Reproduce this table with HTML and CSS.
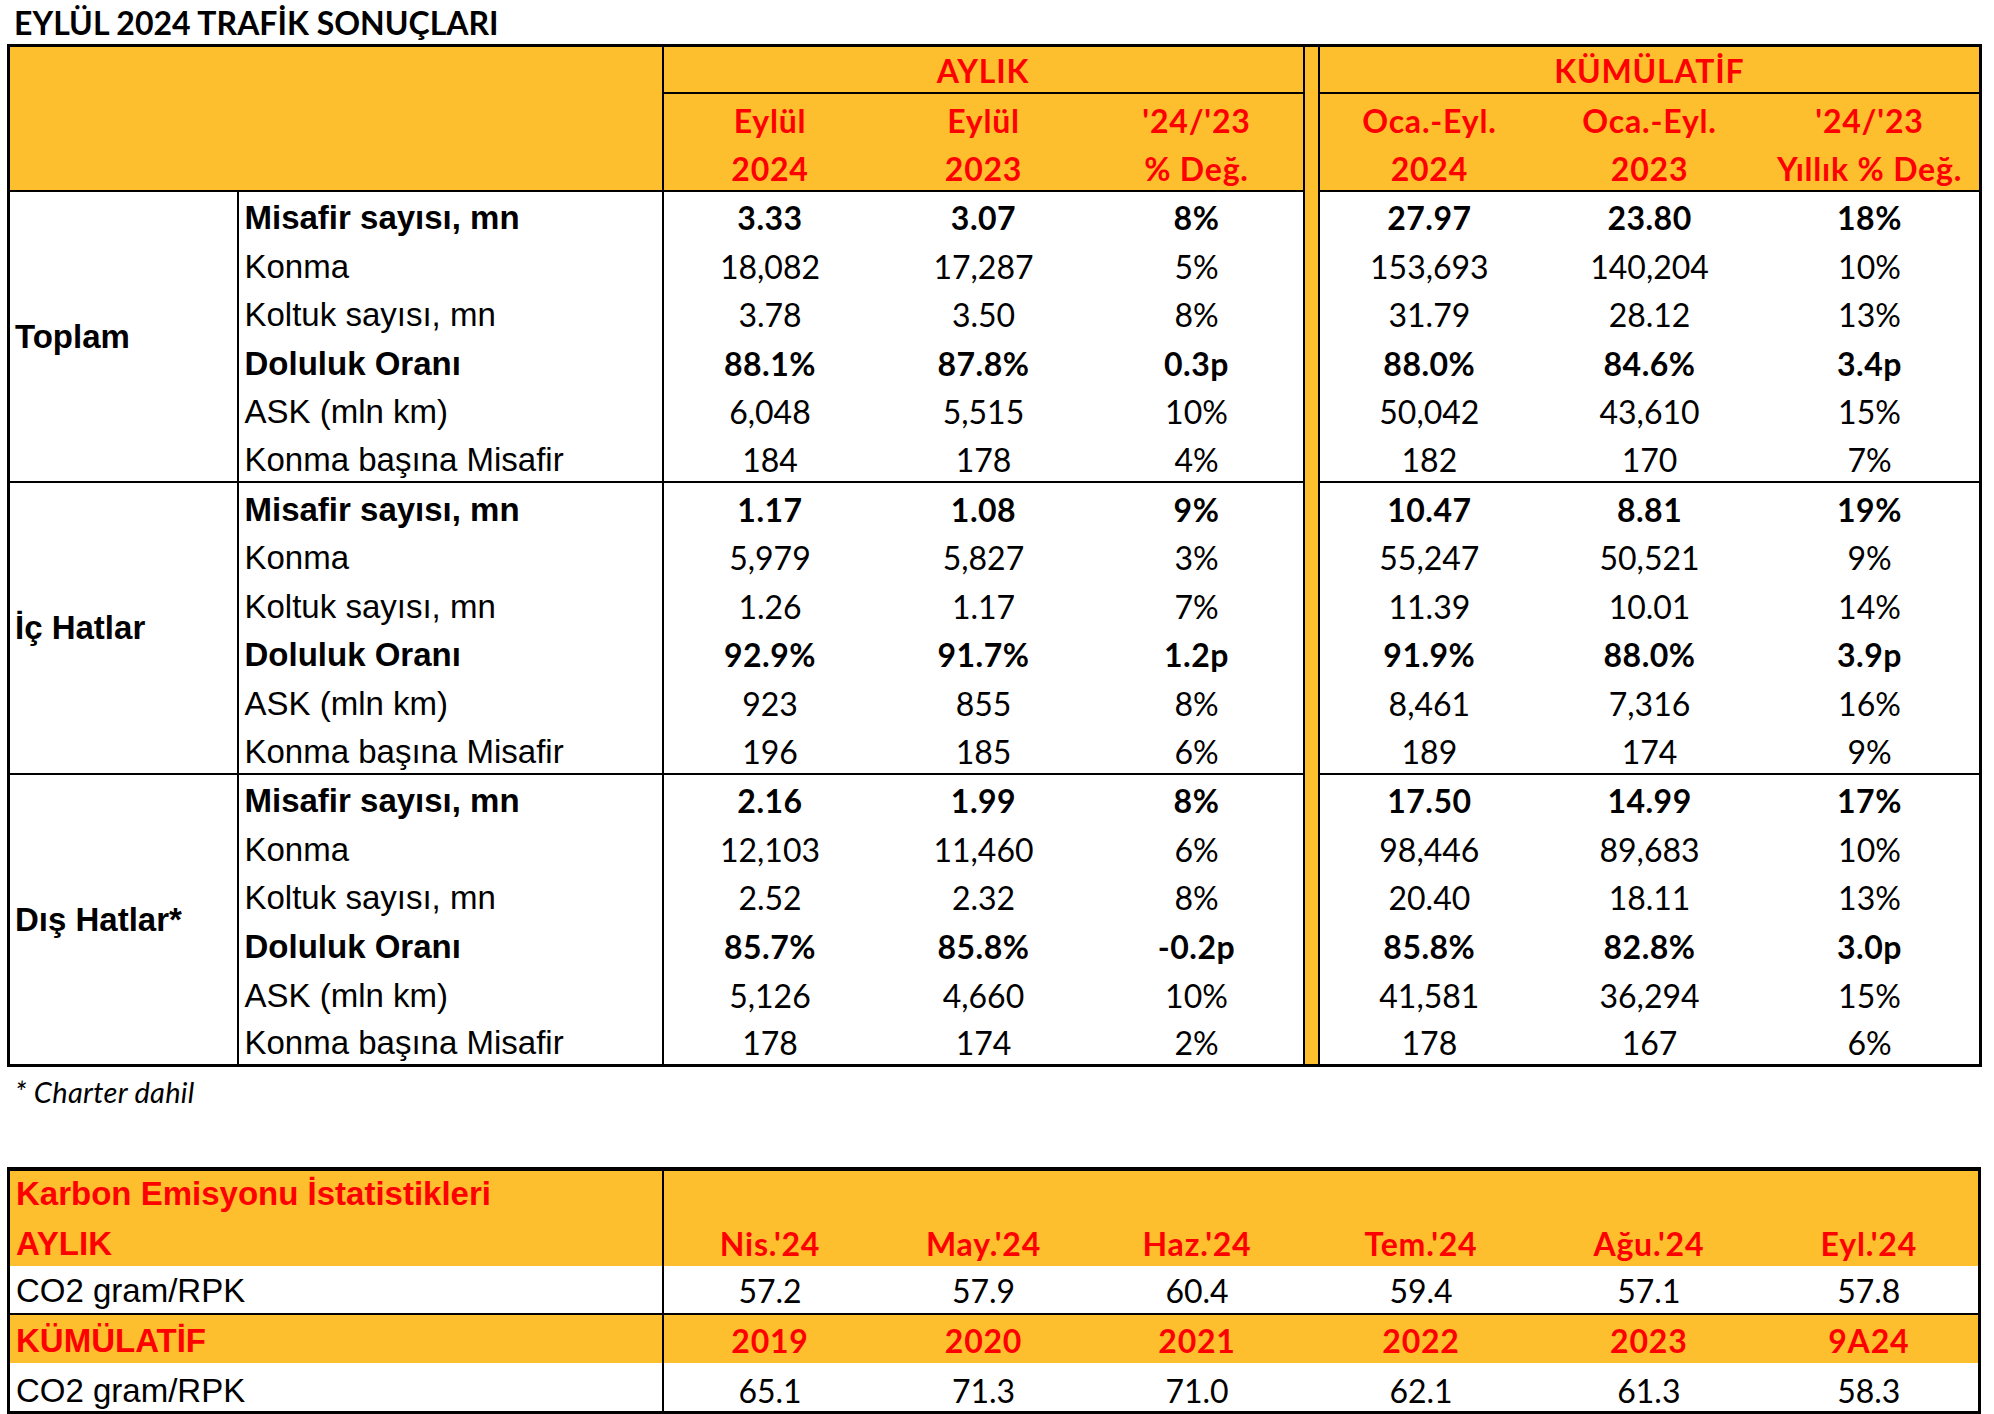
FILE: index.html
```html
<!DOCTYPE html>
<html lang="tr">
<head>
<meta charset="utf-8">
<title>Eylül 2024 Trafik Sonuçları</title>
<link rel="stylesheet" href="styles.css">
</head>
<body>
<div class="page">
  <h1 class="title">EYLÜL 2024 TRAFİK SONUÇLARI</h1>

  <table class="traffic">
    <colgroup>
      <col class="c-grp"><col class="c-lbl">
      <col class="c-m"><col class="c-m"><col class="c-m3">
      <col class="c-sep">
      <col class="c-k"><col class="c-k"><col class="c-k">
    </colgroup>
    <tbody>
      <tr class="h1">
        <th class="hd-blank" colspan="2" rowspan="3"></th>
        <th class="hd-group" colspan="3">AYLIK</th>
        <td class="sep" rowspan="21"></td>
        <th class="hd-group" colspan="3">KÜMÜLATİF</th>
      </tr>
      <tr class="h2">
        <th class="hd">Eylül</th><th class="hd">Eylül</th><th class="hd">'24/'23</th>
        <th class="hd">Oca.-Eyl.</th><th class="hd">Oca.-Eyl.</th><th class="hd">'24/'23</th>
      </tr>
      <tr class="h3">
        <th class="hd">2024</th><th class="hd">2023</th><th class="hd">% Değ.</th>
        <th class="hd">2024</th><th class="hd">2023</th><th class="hd">Yıllık % Değ.</th>
      </tr>

      <tr class="d b"><th class="grp" rowspan="6">Toplam</th><td class="lbl">Misafir sayısı, mn</td><td>3.33</td><td>3.07</td><td>8%</td><td>27.97</td><td>23.80</td><td>18%</td></tr>
      <tr class="d"><td class="lbl">Konma</td><td>18,082</td><td>17,287</td><td>5%</td><td>153,693</td><td>140,204</td><td>10%</td></tr>
      <tr class="d"><td class="lbl">Koltuk sayısı, mn</td><td>3.78</td><td>3.50</td><td>8%</td><td>31.79</td><td>28.12</td><td>13%</td></tr>
      <tr class="d b"><td class="lbl">Doluluk Oranı</td><td>88.1%</td><td>87.8%</td><td>0.3p</td><td>88.0%</td><td>84.6%</td><td>3.4p</td></tr>
      <tr class="d"><td class="lbl">ASK (mln km)</td><td>6,048</td><td>5,515</td><td>10%</td><td>50,042</td><td>43,610</td><td>15%</td></tr>
      <tr class="d last"><td class="lbl">Konma başına Misafir</td><td>184</td><td>178</td><td>4%</td><td>182</td><td>170</td><td>7%</td></tr>

      <tr class="d b"><th class="grp" rowspan="6">İç Hatlar</th><td class="lbl">Misafir sayısı, mn</td><td>1.17</td><td>1.08</td><td>9%</td><td>10.47</td><td>8.81</td><td>19%</td></tr>
      <tr class="d"><td class="lbl">Konma</td><td>5,979</td><td>5,827</td><td>3%</td><td>55,247</td><td>50,521</td><td>9%</td></tr>
      <tr class="d"><td class="lbl">Koltuk sayısı, mn</td><td>1.26</td><td>1.17</td><td>7%</td><td>11.39</td><td>10.01</td><td>14%</td></tr>
      <tr class="d b"><td class="lbl">Doluluk Oranı</td><td>92.9%</td><td>91.7%</td><td>1.2p</td><td>91.9%</td><td>88.0%</td><td>3.9p</td></tr>
      <tr class="d"><td class="lbl">ASK (mln km)</td><td>923</td><td>855</td><td>8%</td><td>8,461</td><td>7,316</td><td>16%</td></tr>
      <tr class="d last"><td class="lbl">Konma başına Misafir</td><td>196</td><td>185</td><td>6%</td><td>189</td><td>174</td><td>9%</td></tr>

      <tr class="d b"><th class="grp" rowspan="6">Dış Hatlar*</th><td class="lbl">Misafir sayısı, mn</td><td>2.16</td><td>1.99</td><td>8%</td><td>17.50</td><td>14.99</td><td>17%</td></tr>
      <tr class="d"><td class="lbl">Konma</td><td>12,103</td><td>11,460</td><td>6%</td><td>98,446</td><td>89,683</td><td>10%</td></tr>
      <tr class="d"><td class="lbl">Koltuk sayısı, mn</td><td>2.52</td><td>2.32</td><td>8%</td><td>20.40</td><td>18.11</td><td>13%</td></tr>
      <tr class="d b"><td class="lbl">Doluluk Oranı</td><td>85.7%</td><td>85.8%</td><td>-0.2p</td><td>85.8%</td><td>82.8%</td><td>3.0p</td></tr>
      <tr class="d"><td class="lbl">ASK (mln km)</td><td>5,126</td><td>4,660</td><td>10%</td><td>41,581</td><td>36,294</td><td>15%</td></tr>
      <tr class="d"><td class="lbl">Konma başına Misafir</td><td>178</td><td>174</td><td>2%</td><td>178</td><td>167</td><td>6%</td></tr>
    </tbody>
  </table>

  <p class="note">* Charter dahil</p>

  <table class="carbon">
    <colgroup>
      <col class="c-first">
      <col class="c-m"><col class="c-m"><col class="c-m3">
      <col class="c-k4"><col class="c-k"><col class="c-k">
    </colgroup>
    <tbody>
      <tr class="g r1"><th class="clbl red">Karbon Emisyonu İstatistikleri</th><td colspan="6"></td></tr>
      <tr class="g r2"><th class="clbl red">AYLIK</th><td class="hv">Nis.'24</td><td class="hv">May.'24</td><td class="hv">Haz.'24</td><td class="hv">Tem.'24</td><td class="hv">Ağu.'24</td><td class="hv">Eyl.'24</td></tr>
      <tr class="w r3"><th class="clbl">CO2 gram/RPK</th><td>57.2</td><td>57.9</td><td>60.4</td><td>59.4</td><td>57.1</td><td>57.8</td></tr>
      <tr class="g r4"><th class="clbl red">KÜMÜLATİF</th><td class="hv">2019</td><td class="hv">2020</td><td class="hv">2021</td><td class="hv">2022</td><td class="hv">2023</td><td class="hv">9A24</td></tr>
      <tr class="w r5"><th class="clbl">CO2 gram/RPK</th><td>65.1</td><td>71.3</td><td>71.0</td><td>62.1</td><td>61.3</td><td>58.3</td></tr>
    </tbody>
  </table>
</div>
</body>
</html>
```

FILE: styles.css
```css
* { box-sizing: border-box; }
html, body { margin: 0; padding: 0; background: #fff; }
body { color: #000; }

.page {
  width: 1994px;
  padding: 0 14px 0 7px;
}

.title {
  margin: 0;
  height: 44px;
  padding: 5px 0 0 7px;
  font-family: Lato, "Open Sans", sans-serif;
  font-weight: 700;
  font-size: 32px;
  line-height: 36px;
}

table {
  border-collapse: collapse;
  table-layout: fixed;
  width: 1973px;
}

td, th {
  padding: 0 0 6px 0;
  font-family: Lato, "Open Sans", sans-serif;
  font-size: 32px;
  line-height: 31px;
  font-weight: 400;
  text-align: center;
  vertical-align: bottom;
  white-space: nowrap;
}

/* column widths */
.c-grp { width: 229px; }
.c-lbl { width: 425px; }
.c-m { width: 214px; }
.c-m3 { width: 213px; }
.c-sep { width: 15px; }
.c-k { width: 220.7px; }
.c-first { width: 654px; }
.c-k4 { width: 235px; }

/* ---------- traffic table ---------- */
.traffic { border: 3px solid #000; }

.traffic .h1 th, .traffic .h2 th, .traffic .h3 th {
  background: #FDBF2D;
  color: #FF0000;
  font-weight: 700;
  letter-spacing: 0.8px;
}
.traffic .h1 { height: 47px; }
.traffic .h2 { height: 49px; }
.traffic .h3 { height: 49px; }
.traffic .hd-blank { border-right: 2px solid #000; border-bottom: 2px solid #000; }
.traffic .hd-group { border-bottom: 2px solid #000; }
.traffic .h3 th { border-bottom: 2px solid #000; }

.traffic .sep {
  background: #FDBF2D;
  border-left: 2px solid #000;
  border-right: 2px solid #000;
  padding: 0;
}

.traffic tr.d { height: 48.6px; }
.traffic tr.b td { font-weight: 700; letter-spacing: 0.5px; }

.traffic .grp {
  text-align: left;
  vertical-align: middle;
  padding: 0 0 0 5px;
  font-family: "Liberation Sans", Arial, sans-serif;
  font-size: 33px;
  font-weight: 700;
  border-right: 2px solid #000;
  border-bottom: 2px solid #000;
}

.traffic .lbl {
  text-align: left;
  padding: 0 0 5px 6px;
  font-family: "Liberation Sans", Arial, sans-serif;
  font-size: 33px;
  line-height: 32px;
  border-right: 2px solid #000;
}
.traffic tr.b .lbl { font-weight: 700; letter-spacing: 0; }

.traffic tr.last td { border-bottom: 2px solid #000; }

/* ---------- footnote ---------- */
.note {
  margin: 0;
  height: 100px;
  padding: 10px 0 0 8px;
  font-family: Lato, "Open Sans", sans-serif;
  font-style: italic;
  font-size: 29px;
  line-height: 30px;
  letter-spacing: 0.3px;
}

/* ---------- carbon table ---------- */
.carbon { border: 3px solid #000; border-top-width: 4px; }
.carbon tr.g { background: #FDBF2D; }
.carbon .r1 { height: 47px; }
.carbon .r2 { height: 50px; }
.carbon .r3 { height: 48px; }
.carbon .r4 { height: 49px; }
.carbon .r5 { height: 50px; }
.carbon tr.r3 th, .carbon tr.r3 td { border-bottom: 2px solid #000; }
.carbon td { padding-bottom: 7px; }
.carbon tr.r5 td { padding-bottom: 5px; }

.carbon .clbl {
  text-align: left;
  padding: 0 0 6px 6px;
  font-family: "Liberation Sans", Arial, sans-serif;
  font-size: 33px;
  line-height: 32px;
  font-weight: 400;
  border-right: 2px solid #000;
}
.carbon tr.r5 .clbl { padding-bottom: 4px; }
.carbon .clbl.red { color: #FF0000; font-weight: 700; }
.carbon .hv { color: #FF0000; font-weight: 700; letter-spacing: 0.8px; }
```
